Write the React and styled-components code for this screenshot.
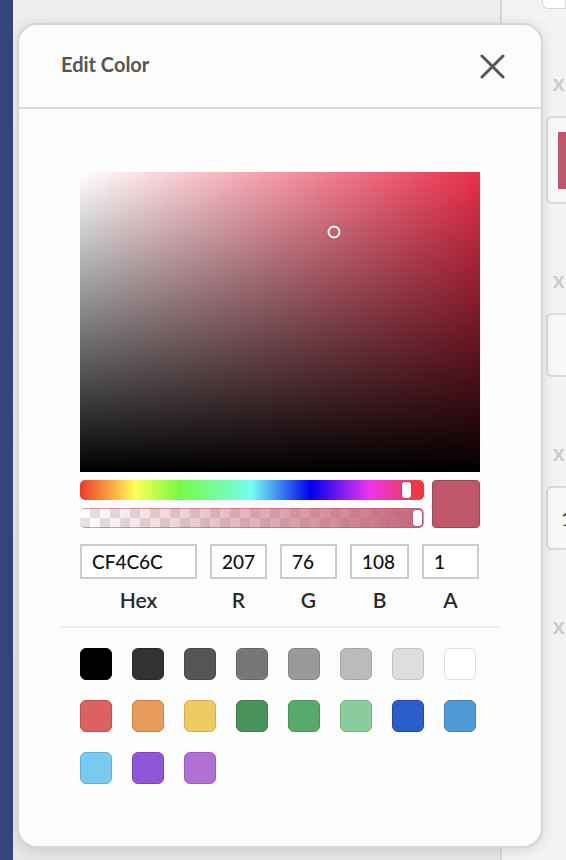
import React from 'react';
import styled, { createGlobalStyle } from 'styled-components';

const GlobalStyle = createGlobalStyle`
  html, body {
    margin: 0;
    padding: 0;
    height: 100%;
    overflow: hidden;
  }
  body {
    font-family: Lato, "Open Sans", Arial, sans-serif;
    background: #e9e9e9;
  }
  #root {
    height: 100%;
  }
`;

const Page = styled.div`
  position: relative;
  display: flex;
  height: 860px;
  width: 566px;
  overflow: hidden;
`;

const NavStrip = styled.div`
  width: 13px;
  flex-shrink: 0;
  background: #36467a;
`;

const MainArea = styled.div`
  flex: 1;
  background: linear-gradient(to bottom, #eeeeee, #e6e6e6);
`;

const SidePanel = styled.div`
  width: 66px;
  flex-shrink: 0;
  border-left: 2px solid #d6d6d6;
  background: #f3f3f3;
  padding-left: 44px;
  box-sizing: border-box;
  display: flex;
  flex-direction: column;
`;

const TopCard = styled.div`
  height: 8px;
  margin-left: -4px;
  background: #fff;
  border: 1px solid #d8d8d8;
  border-top: none;
  border-radius: 0 0 0 6px;
`;

const RemoveX = styled.div`
  margin-top: ${(p) => (p.first ? 64 : 66)}px;
  margin-left: 7px;
  height: 20px;
  line-height: 20px;
  font-size: 22px;
  font-weight: 700;
  color: #cbcbcb;
`;

const SideCard = styled.div`
  margin-top: 23px;
  height: ${(p) => p.h}px;
  background: #f8f8f8;
  border: 2px solid #dadada;
  border-right: none;
  border-radius: 6px 0 0 6px;
  box-sizing: border-box;
  display: flex;
  align-items: center;
  padding-left: 13px;
  font-size: 20px;
  color: #333;
`;

const SideSwatch = styled.div`
  width: 20px;
  height: 57px;
  margin-left: -3px;
  background: #c0566c;
`;

const Modal = styled.div`
  position: absolute;
  left: 17px;
  top: 23px;
  width: 526px;
  height: 825px;
  box-sizing: border-box;
  background: #fcfcfc;
  border: 2px solid #d6d6d6;
  border-radius: 20px;
  box-shadow: 0 2px 14px rgba(0, 0, 0, 0.12);
  display: flex;
  flex-direction: column;
`;

const Header = styled.div`
  height: 84px;
  flex-shrink: 0;
  box-sizing: border-box;
  border-bottom: 2px solid #dcdcdc;
  display: flex;
  align-items: center;
  justify-content: space-between;
  padding: 0 36px 0 42px;
`;

const Title = styled.div`
  font-size: 20px;
  font-weight: 700;
  color: #555;
  margin-top: -4px;
`;

const CloseButton = styled.button`
  border: none;
  background: none;
  padding: 0;
  width: 26px;
  height: 26px;
  display: flex;
  align-items: center;
  justify-content: center;
  cursor: pointer;
`;

const Body = styled.div`
  padding: 63px 41px 0 41px;
  display: flex;
  flex-direction: column;
`;

const Picker = styled.div`
  padding: 0 20px;
  display: flex;
  flex-direction: column;
`;

const Saturation = styled.div`
  position: relative;
  height: 300px;
  background-color: #ea2f4c;
  background-image: linear-gradient(to top, #000, rgba(0, 0, 0, 0)),
    linear-gradient(to right, #fff, rgba(255, 255, 255, 0));
`;

const Pointer = styled.div`
  position: absolute;
  width: 13px;
  height: 13px;
  box-sizing: border-box;
  border: 2.5px solid #fff;
  border-radius: 50%;
  box-shadow: 0 0 1px rgba(0, 0, 0, 0.5);
  transform: translate(-50%, -50%);
`;

const SliderRow = styled.div`
  margin-top: 8px;
  display: flex;
  gap: 8px;
`;

const Sliders = styled.div`
  flex: 1;
  display: flex;
  flex-direction: column;
  gap: 8px;
`;

const Track = styled.div`
  position: relative;
  height: 20px;
  border-radius: 5px;
`;

const HueTrack = styled(Track)`
  background: linear-gradient(
    to right,
    #ee3a2c 0%,
    #fefe55 16%,
    #76fa46 29%,
    #76fcf2 50%,
    #0000ee 67%,
    #ec34ee 84%,
    #ee3a2c 100%
  );
`;

const AlphaTrack = styled(Track)`
  overflow: hidden;
  background-color: #fff;
  background-image: linear-gradient(45deg, #e4e4e4 25%, transparent 25%, transparent 75%, #e4e4e4 75%),
    linear-gradient(45deg, #e4e4e4 25%, transparent 25%, transparent 75%, #e4e4e4 75%);
  background-size: 20px 20px;
  background-position: 0 0, 10px 10px;
  &::after {
    content: '';
    position: absolute;
    inset: 0;
    border-radius: 5px;
    border: 1px solid rgba(192, 86, 108, 0.6);
    border-left: none;
    background: linear-gradient(to right, rgba(196, 92, 114, 0), rgba(194, 94, 114, 0.95));
  }
`;

const Handle = styled.div`
  position: absolute;
  top: 2px;
  width: 9px;
  height: 16px;
  border-radius: 3px;
  background: #fff;
  box-shadow: 0 0 1px rgba(0, 0, 0, 0.4);
  z-index: 1;
`;

const Preview = styled.div`
  width: 48px;
  height: 48px;
  box-sizing: border-box;
  border-radius: 4px;
  background: #c0566c;
  border: 1.5px solid #9c4558;
`;

const Fields = styled.div`
  margin-top: 16px;
  display: grid;
  grid-template-columns: 117px 57px 57px 59px 57px;
  column-gap: 13px;
  row-gap: 4px;
`;

const Field = styled.input`
  height: 35px;
  width: 100%;
  box-sizing: border-box;
  border: 2px solid #cccccc;
  background: #fff;
  padding: 0 0 0 10px;
  font-family: Lato, Arial, sans-serif;
  font-size: 19px;
  font-weight: 500;
  color: #111;
  outline: none;
`;

const FieldLabel = styled.div`
  text-align: center;
  font-size: 21px;
  font-weight: 600;
  color: #2a2a2a;
  line-height: 34px;
`;

const Divider = styled.div`
  margin-top: 9px;
  height: 2px;
  background: #eeeeee;
`;

const Swatches = styled.div`
  margin-top: 20px;
  padding: 0 20px;
  display: grid;
  grid-template-columns: repeat(8, 32px);
  column-gap: 20px;
  row-gap: 20px;
`;

const Swatch = styled.div`
  width: 32px;
  height: 32px;
  box-sizing: border-box;
  border-radius: 6px;
  background: ${(p) => p.color};
  border: 1.5px solid ${(p) => p.edge};
`;

const swatches = [
  ['#000000', '#000000'],
  ['#333333', '#2a2a2a'],
  ['#555555', '#474747'],
  ['#777777', '#636363'],
  ['#999999', '#838383'],
  ['#bbbbbb', '#a4a4a4'],
  ['#dedede', '#c4c4c4'],
  ['#ffffff', '#dedede'],
  ['#dd615e', '#c14f4d'],
  ['#e69c5a', '#c9844a'],
  ['#ecca62', '#d2ad4d'],
  ['#4a935c', '#3d7d4d'],
  ['#56ab6a', '#489458'],
  ['#8acd9d', '#72b385'],
  ['#2b5dcc', '#2349a8'],
  ['#509ad6', '#4283bb'],
  ['#78caf0', '#62b0d4'],
  ['#8f56d6', '#7a45bb'],
  ['#b06fd4', '#9a5dbb'],
];

const fields = [
  { label: 'Hex', value: 'CF4C6C' },
  { label: 'R', value: '207' },
  { label: 'G', value: '76' },
  { label: 'B', value: '108' },
  { label: 'A', value: '1' },
];

const CloseIcon = () => (
  <svg width="25" height="25" viewBox="0 0 25 25">
    <path d="M2 2 L23 23 M23 2 L2 23" stroke="#555" strokeWidth="3" strokeLinecap="round" />
  </svg>
);

const App = () => (
  <>
    <GlobalStyle />
    <Page>
      <NavStrip />
      <MainArea />
      <SidePanel>
        <TopCard />
        <RemoveX first>x</RemoveX>
        <SideCard h={88}>
          <SideSwatch />
        </SideCard>
        <RemoveX>x</RemoveX>
        <SideCard h={64} />
        <RemoveX>x</RemoveX>
        <SideCard h={64}>1</SideCard>
        <RemoveX>x</RemoveX>
      </SidePanel>

      <Modal>
        <Header>
          <Title>Edit Color</Title>
          <CloseButton aria-label="Close">
            <CloseIcon />
          </CloseButton>
        </Header>
        <Body>
          <Picker>
            <Saturation>
              <Pointer style={{ left: '63.5%', top: '20%' }} />
            </Saturation>
            <SliderRow>
              <Sliders>
                <HueTrack>
                  <Handle style={{ left: 322 }} />
                </HueTrack>
                <AlphaTrack>
                  <Handle style={{ left: 333 }} />
                </AlphaTrack>
              </Sliders>
              <Preview />
            </SliderRow>
            <Fields>
              {fields.map((f) => (
                <Field key={f.label} defaultValue={f.value} />
              ))}
              {fields.map((f) => (
                <FieldLabel key={f.label}>{f.label}</FieldLabel>
              ))}
            </Fields>
          </Picker>
          <Divider />
          <Swatches>
            {swatches.map(([c, e], i) => (
              <Swatch key={i} color={c} edge={e} />
            ))}
          </Swatches>
        </Body>
      </Modal>
    </Page>
  </>
);

export default App;
